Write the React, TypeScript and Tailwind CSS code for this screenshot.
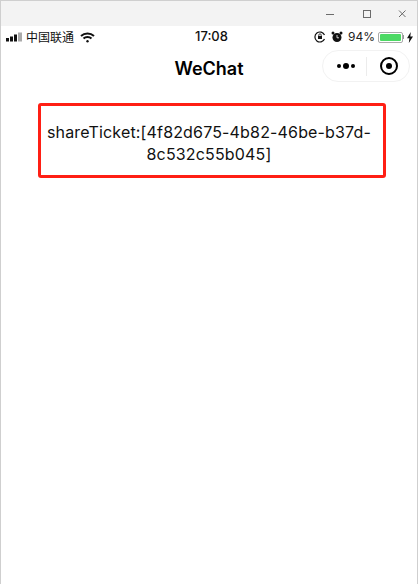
const font = { fontFamily: 'Inter, "Liberation Sans", "Noto Sans CJK SC", sans-serif' };

function TitleBar() {
  return (
    <div className="flex h-[25px] items-center justify-end bg-[#f3f3f3] pr-[8px]">
      <svg width="130" height="25" viewBox="0 0 130 25" fill="none" stroke="#6b6b6b" strokeWidth="1">
        <path d="M47 13.500h8" />
        <rect x="84.500" y="9.500" width="7" height="7" />
        <path d="M120 9.500l6.500 6.500M126.500 9.500l-6.500 6.500" />
      </svg>
    </div>
  );
}

function StatusBar() {
  return (
    <div className="relative flex h-[22px] items-center justify-between px-[4px] text-[13px] text-[#111]">
      <div className="flex items-center">
        <svg width="18" height="10" viewBox="0 0 18 10" fill="#111">
          <rect x="1" y="6" width="3" height="3.500" />
          <rect x="5" y="4.500" width="3" height="5" />
          <rect x="9" y="2.500" width="3" height="7" />
          <rect x="13" y="0.500" width="4" height="9" fill="#aaa" />
        </svg>
        <span className="ml-[3px] text-[12px]" style={{ fontFamily: '"Noto Sans CJK SC", sans-serif' }}>中国联通</span>
        <svg className="ml-[6px]" width="15" height="11" viewBox="0 0 15 11" fill="none" stroke="#111" strokeWidth="2">
          <path d="M1 4a9.500 9.500 0 0 1 13 0" />
          <path d="M3.500 6.500a5.800 5.800 0 0 1 8 0" />
          <circle cx="7.500" cy="9.300" r="1.200" fill="#111" stroke="none" />
        </svg>
      </div>
      <span className="absolute left-[194px] text-[13px] font-medium">17:08</span>
      <div className="flex items-center">
        <svg width="12" height="12" viewBox="0 0 12 12" fill="none" stroke="#111" strokeWidth="1.200">
          <path d="M10.500 8A5 5 0 1 1 10.500 4" />
          <rect x="4" y="5" width="4" height="3" fill="#111" stroke="none" />
          <path d="M4.800 5V4a1.200 1.200 0 0 1 2.400 0v1" strokeWidth="0.800" />
        </svg>
        <svg className="ml-[5px]" width="12" height="12" viewBox="0 0 12 12" fill="#111">
          <circle cx="6" cy="6.500" r="4.500" />
          <circle cx="2" cy="2" r="1.500" />
          <circle cx="10" cy="2" r="1.500" />
          <path d="M6 4v2.800h2" fill="none" stroke="#fff" strokeWidth="0.800" />
        </svg>
        <span className="ml-[5px] text-[12px] text-[#222]">94%</span>
        <div className="ml-[3px] flex h-[11px] w-[25px] items-center rounded-[2px] border border-[#aaa] p-px">
          <div className="h-full w-full rounded-[1px] bg-[#4cd964]" />
        </div>
        <div className="h-[4px] w-px bg-[#999]" />
        <svg className="ml-[3px]" width="6" height="11" viewBox="0 0 6 11" fill="#111">
          <path d="M3.800 0L0 6.200h2.400L1.800 11 6 4.500H3.300z" />
        </svg>
      </div>
    </div>
  );
}

function NavBar() {
  return (
    <div className="relative flex h-[37px] items-center justify-center pt-[4px]">
      <span className="text-[18px] font-semibold text-black">WeChat</span>
      <div className="absolute right-[7px] top-[2px] flex h-[32px] w-[88px] items-center rounded-full border border-[#f2f2f2] bg-white">
        <div className="flex w-[43px] items-center justify-center gap-[2px] pl-[2px]">
          <span className="h-[4px] w-[4px] rounded-full bg-black" />
          <span className="h-[6px] w-[6px] rounded-full bg-black" />
          <span className="h-[4px] w-[4px] rounded-full bg-black" />
        </div>
        <div className="h-[19px] w-px bg-[#ececec]" />
        <div className="flex flex-1 items-center justify-center pl-[2px]">
          <div className="flex h-[18px] w-[18px] items-center justify-center rounded-full border-2 border-black">
            <span className="h-[6px] w-[6px] rounded-full bg-black" />
          </div>
        </div>
      </div>
    </div>
  );
}

export default function App() {
  return (
    <div
      className="flex h-[584px] w-[418px] flex-col overflow-hidden border-x border-t border-[#cfcfcf] bg-white"
      style={font}
    >
      <TitleBar />
      <StatusBar />
      <NavBar />
      <div className="flex-1 pl-[37px] pr-[31px] pt-[18px]">
        <div className="flex h-[75px] items-center justify-center rounded-[3px] border-[3px] border-[#ff1f14] pr-[6px] pt-[4px] text-center text-[16px] leading-[22px] tracking-[0.16px] text-[#111]">
          <p>
            shareTicket:[4f82d675-4b82-46be-b37d-
            <br />
            8c532c55b045]
          </p>
        </div>
      </div>
    </div>
  );
}
